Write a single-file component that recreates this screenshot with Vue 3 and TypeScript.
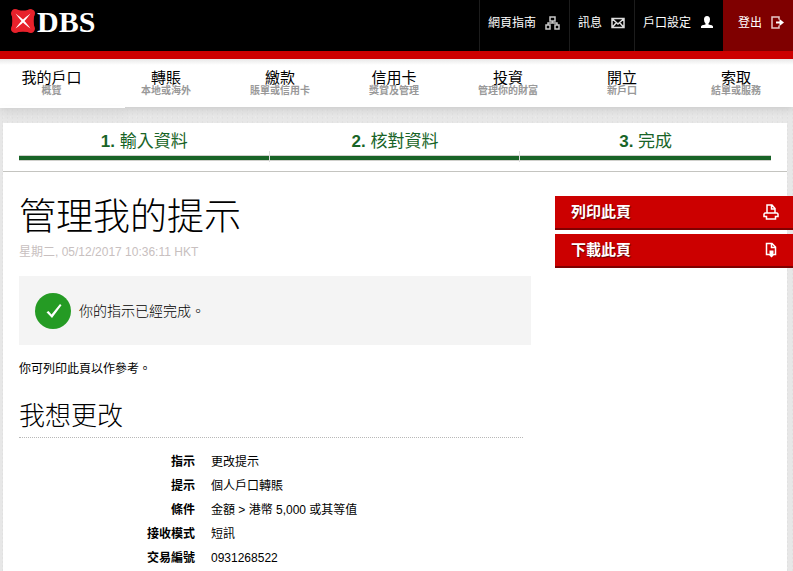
<script setup lang="ts">
interface NavItem {
  title: string
  sub: string
}

interface Detail {
  label: string
  value: string
}

const navItems: NavItem[] = [
  { title: '我的戶口', sub: '概覽' },
  { title: '轉賬', sub: '本地或海外' },
  { title: '繳款', sub: '賬單或信用卡' },
  { title: '信用卡', sub: '獎賞及管理' },
  { title: '投資', sub: '管理你的財富' },
  { title: '開立', sub: '新戶口' },
  { title: '索取', sub: '結單或服務' },
]

const steps: string[] = ['輸入資料', '核對資料', '完成']

const details: Detail[] = [
  { label: '指示', value: '更改提示' },
  { label: '提示', value: '個人戶口轉賬' },
  { label: '條件', value: '金額 > 港幣 5,000 或其等值' },
  { label: '接收模式', value: '短訊' },
  { label: '交易編號', value: '0931268522' },
]
</script>

<template>
  <div class="page">
    <header class="topbar">
      <a class="logo" href="#">
        <svg class="logo-mark" width="24" height="24" viewBox="0 0 24 24" aria-hidden="true">
          <path d="M4 0Q6 0 7.500 1Q12 2 16.500 1Q18 0 20 0Q24 1 24 4Q24 6 23 7.500Q22.500 12 23 16.500Q24 18 24 20Q23 24 20 24Q18 24 16.500 23Q12 22.500 7.500 23Q6 24 4 24Q0 23 0 20Q0 18 1 16.500Q1.500 12 1 7.500Q0 6 0 4Q1 0 4 0Z" fill="#e8212b" />
          <path d="M4.500 4.500Q10 8.500 12 10.500Q14 8.500 19.500 4.500Q15.500 10 13.500 12Q15.500 14 19.500 19.500Q14 15.500 12 13.500Q10 15.500 4.500 19.500Q8.500 14 10.500 12Q8.500 10 4.500 4.500Z" fill="#fff" />
        </svg>
        <span>DBS</span>
      </a>
      <nav class="tools">
        <a class="tool" href="#">
          <span>網頁指南</span>
          <svg width="15" height="14" viewBox="0 0 15 14" fill="none" stroke="#c8c8c8" aria-hidden="true">
            <path d="M5 1h5v4H5zM1 9h4v4H1zM10 9h4v4h-4zM7.500 5v2M3 9V7h9v2" stroke-width="1.500" />
          </svg>
        </a>
        <a class="tool" href="#">
          <span>訊息</span>
          <svg width="14" height="14" viewBox="0 0 14 14" fill="none" stroke="#ddd" aria-hidden="true">
            <path d="M1 2.500h12v9H1zM1.500 3l5.500 5L12.500 3M1.500 11l4-4.500M12.500 11l-4-4.500" stroke-width="1.500" />
          </svg>
        </a>
        <a class="tool" href="#">
          <span>戶口設定</span>
          <svg width="14" height="14" viewBox="0 0 14 14" fill="#fff" aria-hidden="true">
            <path d="M7 0Q10 0 10 3.500Q10 6 8.500 7.500V8.500Q13 9.200 13 10.500V12H1V10.500Q1 9.200 5.500 8.500V7.500Q4 6 4 3.500Q4 0 7 0Z" />
          </svg>
        </a>
        <a class="tool logout" href="#">
          <span>登出</span>
          <svg width="13" height="14" viewBox="0 0 13 14" fill="none" stroke="#fff" aria-hidden="true">
            <path d="M8 3.500V1H1v11h7V9.500" stroke="#e8c8c8" stroke-width="1.500" />
            <path d="M5 6.500h5" stroke-width="2" />
            <path d="M8.500 3l4.500 3.500L8.500 10z" fill="#fff" stroke="none" />
          </svg>
        </a>
      </nav>
    </header>

    <nav class="mainnav">
      <a v-for="item in navItems" :key="item.title" class="nav-item" href="#">
        <span class="nav-title">{{ item.title }}</span>
        <span class="nav-sub">{{ item.sub }}</span>
      </a>
    </nav>

    <main class="card">
      <ol class="steps">
        <li v-for="(step, i) in steps" :key="step" class="step">
          <b>{{ i + 1 }}.</b> {{ step }}
        </li>
      </ol>

      <div class="columns">
        <section class="content">
          <h1>管理我的提示</h1>
          <p class="date">星期二, 05/12/2017 10:36:11 HKT</p>
          <div class="notice">
            <svg width="36" height="36" viewBox="0 0 36 36" aria-hidden="true">
              <circle cx="18" cy="18" r="18" fill="#259b24" />
              <path d="M11.500 19.200L13.500 18L16.500 21.500L25 11L26.500 12.200L17 25Z" fill="#fff" />
            </svg>
            <span>你的指示已經完成。</span>
          </div>
          <p class="hint">你可列印此頁以作參考。</p>
          <h2>我想更改</h2>
          <table class="details">
            <tbody>
              <tr v-for="row in details" :key="row.label">
                <th scope="row">{{ row.label }}</th>
                <td>{{ row.value }}</td>
              </tr>
            </tbody>
          </table>
        </section>

        <aside class="actions">
          <button type="button">
            <span>列印此頁</span>
            <svg width="16" height="16" viewBox="0 0 16 16" fill="none" stroke="#fff" stroke-width="1.500" aria-hidden="true">
              <path d="M4 9V1h5l3 3.500V9M8.500 1v4H12" />
              <path d="M3.500 15v-2.500H1V10l1-1h12l1 1v2.500h-2.500V15z" />
            </svg>
          </button>
          <button type="button">
            <span>下載此頁</span>
            <svg width="16" height="16" viewBox="0 0 16 16" fill="none" stroke="#fff" stroke-width="1.500" aria-hidden="true">
              <path d="M6 12.500H3.500V1.500H9l3.500 3.500v7.500H11M8.500 1.500V5.500h4" />
              <path d="M6.500 8.500h4v3.500h1.500l-3.500 3.500L5 12h1.500z" fill="#fff" stroke="none" />
            </svg>
          </button>
        </aside>
      </div>
    </main>
  </div>
</template>

<style>
body {
  margin: 0;
  background-color: #e7e7e7;
  background-image:
    radial-gradient(#e1e1e1 1px, transparent 1px),
    radial-gradient(#ebebeb 1px, transparent 1px);
  background-size: 5px 4px, 7px 6px;
}
</style>

<style scoped>
.page {
  font-family: "Liberation Sans", "Noto Sans CJK TC", sans-serif;
  font-size: 12px;
  line-height: 18px;
  color: #000;
}

a {
  color: inherit;
  text-decoration: none;
}

.topbar {
  position: relative;
  z-index: 1;
  display: flex;
  justify-content: space-between;
  height: 51px;
  background: #000;
  border-bottom: 8px solid #c00;
  color: #fff;
}

.logo {
  display: flex;
  gap: 2px;
  padding: 9px 0 0 11px;
  font-family: "Liberation Serif", serif;
  font-size: 30px;
  font-weight: bold;
  line-height: 26px;
}

.tools {
  display: flex;
}

.tool {
  display: flex;
  align-items: center;
  gap: 9px;
  padding: 0 9px 6px 8px;
  border-left: 1px solid #1c1c1c;
}

.logout {
  padding: 0 9px 6px 15px;
  border-left: 0;
  background: #7f0000;
}

.mainnav {
  position: relative;
  display: grid;
  grid-template-columns: 109px repeat(6, 1fr);
  height: 48px;
  background: linear-gradient(#e8e8e8, #fff 6px);
  box-shadow: 0 2px 8px #c8c8c8;
}

.mainnav::after {
  content: "";
  position: absolute;
  left: 0;
  top: 47px;
  width: 125px;
  height: 2px;
  background: #fff;
  box-shadow: 0 6px 8px #d0d0d0;
}

.nav-item {
  display: flex;
  flex-direction: column;
  align-items: center;
  padding-top: 11px;
}

.nav-item:first-child {
  padding-right: 6px;
}

.nav-title {
  font-size: 15px;
  line-height: 15px;
}

.nav-sub {
  font-size: 10px;
  font-weight: bold;
  line-height: 12px;
  color: #999;
}

.card {
  position: relative;
  margin: 16px 6px 0 3px;
  min-height: 448px;
  background: #fff;
}

.steps {
  display: grid;
  grid-template-columns: repeat(3, 1fr);
  margin: 0;
  padding: 7px 16px 9px;
  border-bottom: 1px solid #c4c4c0;
  list-style: none;
}

.step {
  position: relative;
  padding-bottom: 8px;
  font-size: 17px;
  line-height: 24px;
  text-align: center;
  color: #186427;
}

.step::before {
  content: "";
  position: absolute;
  inset: auto 0 1px;
  height: 4px;
  border: solid #d0d0cc;
  border-width: 1px 0;
  background: #186427;
}

.step:not(:last-child)::after {
  content: "";
  position: absolute;
  right: 0;
  bottom: 0;
  width: 1px;
  height: 11px;
  background: #ddd;
}

.columns {
  display: flex;
  gap: 24px;
  margin-right: -6px;
  padding: 24px 0 0 16px;
}

.content {
  flex: 1;
}

h1,
h2,
p {
  margin: 0;
}

h1 {
  font-size: 37px;
  font-weight: 300;
  line-height: 43px;
}

.date {
  margin-top: 4px;
  color: #c8c0c0;
}

.notice {
  display: flex;
  align-items: center;
  gap: 8px;
  min-height: 69px;
  box-sizing: border-box;
  margin-top: 15px;
  padding: 16px;
  background: #f4f4f4;
  font-size: 14px;
  font-weight: 300;
}

.hint {
  margin-top: 15px;
}

h2 {
  margin: 18px 8px 0 0;
  border-bottom: 1px dotted #b8b8b8;
  font-size: 26px;
  font-weight: 300;
  line-height: 41px;
}

.details {
  width: 100%;
  margin-top: 12px;
  border-collapse: collapse;
}

.details th,
.details td {
  padding: 3px 0;
  line-height: 18px;
  text-align: left;
}

.details th {
  width: 176px;
  padding-right: 16px;
  text-align: right;
}

.actions {
  display: flex;
  flex: 0 0 238px;
  flex-direction: column;
  gap: 4px;
}

.actions button {
  display: flex;
  align-items: center;
  justify-content: space-between;
  height: 34px;
  padding: 0 14px 0 16px;
  border: 0;
  border-bottom: 2px solid #7f0000;
  background: #c00;
  color: #fff;
  font: bold 15px/20px "Liberation Sans", "Noto Sans CJK TC", sans-serif;
  text-shadow: 1px 1px 1px #600;
}
</style>
